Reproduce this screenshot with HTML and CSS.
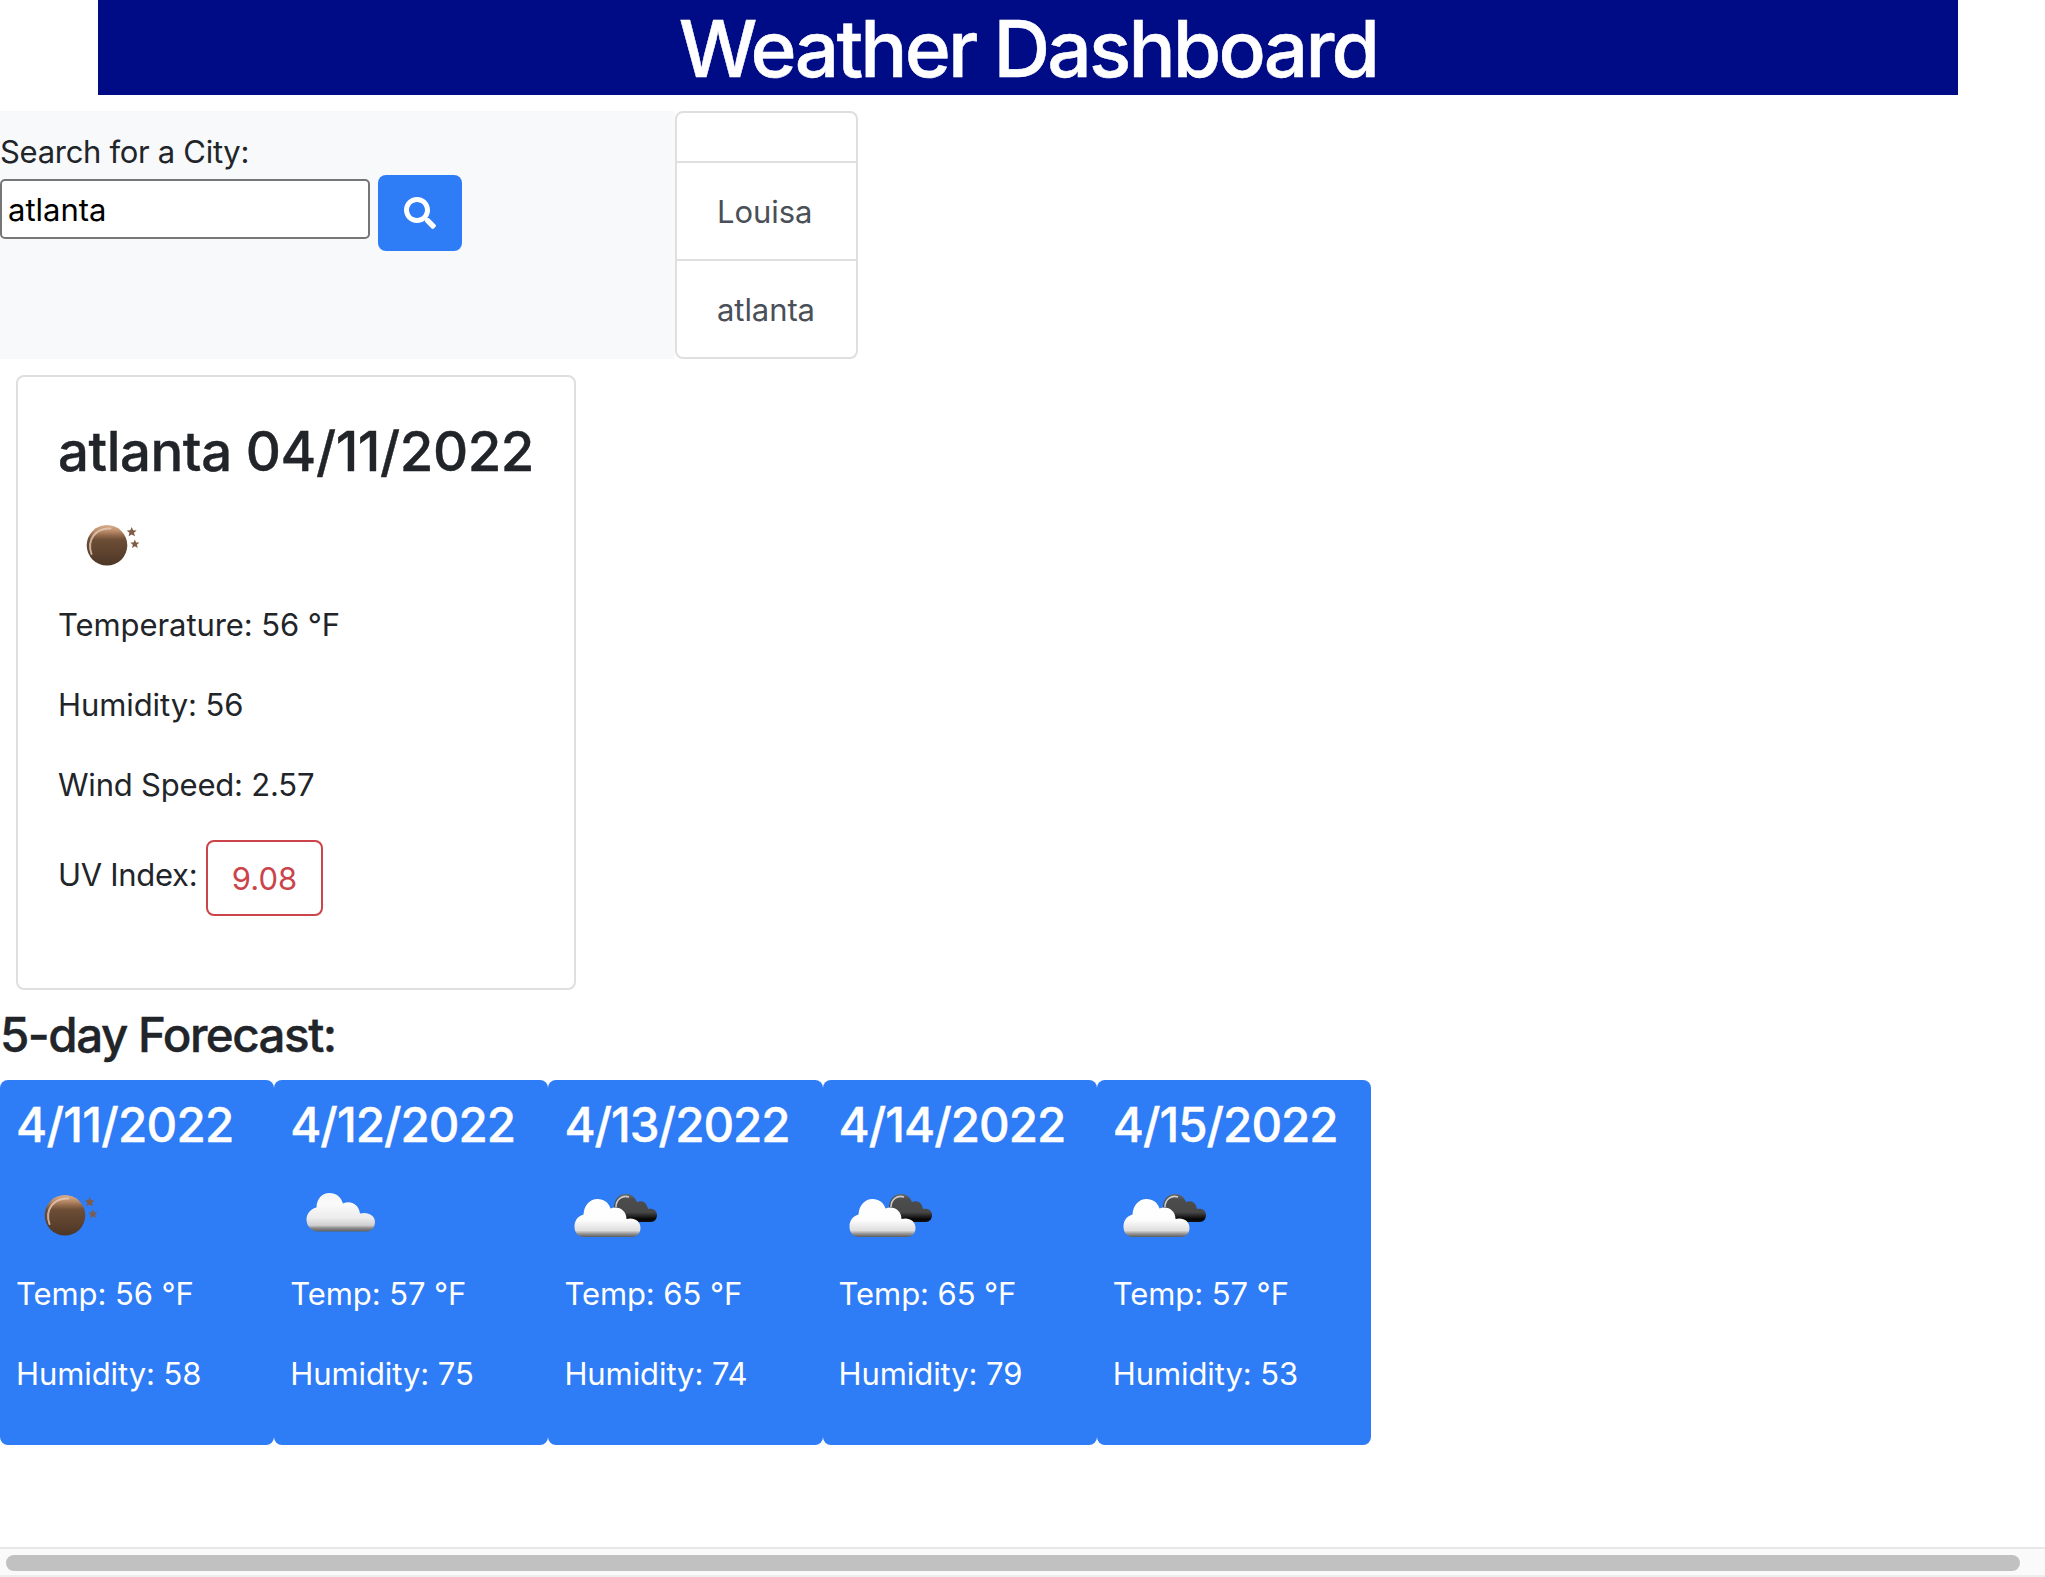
FILE: index.html
```html
<!DOCTYPE html>
<html lang="en">
<head>
<meta charset="utf-8">
<title>Weather Dashboard</title>
<link rel="stylesheet" href="styles.css">
</head>
<body>
<svg class="defs" width="0" height="0" aria-hidden="true">
  <defs>
    <linearGradient id="moon" x1="0" y1="0" x2="0" y2="1">
      <stop offset="0" stop-color="#d9ad8c"/><stop offset=".14" stop-color="#bd8e6c"/><stop offset=".27" stop-color="#8d6548"/><stop offset=".36" stop-color="#6d4e36"/><stop offset="1" stop-color="#4d3626"/>
    </linearGradient>
    <linearGradient id="cloud" x1="0" y1="0" x2="0" y2="1">
      <stop offset="0" stop-color="#f6f6f6"/><stop offset=".3" stop-color="#fafafa"/><stop offset=".65" stop-color="#ececec"/><stop offset=".84" stop-color="#cfcfcf"/><stop offset=".91" stop-color="#8c8c8c"/><stop offset="1" stop-color="#606060"/>
    </linearGradient>
    <linearGradient id="front" x1="0" y1="0" x2="0" y2="1">
      <stop offset="0" stop-color="#fff"/><stop offset=".55" stop-color="#fdfdfd"/><stop offset=".83" stop-color="#dedede"/><stop offset=".91" stop-color="#999"/><stop offset="1" stop-color="#5c5c5c"/>
    </linearGradient>
    <linearGradient id="dark" x1="0" y1="0" x2="0" y2="1">
      <stop offset="0" stop-color="#666"/><stop offset=".2" stop-color="#4c4c4c"/><stop offset=".65" stop-color="#484848"/><stop offset=".9" stop-color="#050505"/><stop offset="1" stop-color="#111"/>
    </linearGradient>
    <symbol id="icon-night" viewBox="0 0 100 100">
      <circle cx="49" cy="50.300" r="20.300" fill="url(#moon)"/>
      <path d="M33.500 59C28.500 45 37.500 32.500 52.500 33.500" fill="none" stroke="#e6cab8" stroke-width="2" stroke-linecap="round" opacity=".8"/>
      <path d="M73.700 32l1.400 3.300 3.600.2-2.700 2.300.9 3.500-3.200-1.900-3.100 1.900.8-3.500-2.700-2.300 3.600-.2zM76.800 44.500l1.300 3 3.300.1-2.500 2.100.8 3.200-2.900-1.700-2.800 1.700.8-3.200-2.500-2.100 3.200-.1z" fill="#805b45"/>
    </symbol>
    <symbol id="icon-cloud" viewBox="0 0 100 100">
      <path d="M28 66.500C21 66.500 16.500 60.500 16.500 54.500 16.500 48.500 21 43.500 26.500 42.500 26.500 34 32 28 39.500 28 46 28 51 32 53 38.500 60.500 35 69 39.500 70 48.500 78 46.500 85 50.500 85 57 85 62 81.500 66.500 77 66.500Z" fill="url(#cloud)"/>
    </symbol>
    <symbol id="icon-broken" viewBox="0 0 100 100">
      <path d="M50 52V41C51 33 56 29 62 29 67.500 29 71 32 73 37 79 34.500 83 38 84 44 89.500 43 93 46 93 50 93 54 90.500 57 87 57H62Z" fill="url(#dark)"/>
      <path d="M52 42C52 35 58 29.500 65 32" fill="none" stroke="#ccc" stroke-width="1.600"/>
      <path d="M20 72C14 72 10.500 67.500 10.500 61.500 10.500 55.500 14 51 19.500 49.500 20 40 26 34 33.500 34 40 34 44.500 37.500 46.500 43.500 54.500 40.500 62.500 45.500 62.500 54 70 52 76.500 56 76.500 63 76.500 68.500 73 72 68 72Z" fill="url(#front)"/>
    </symbol>
  </defs>
</svg>

<header class="banner"><h1>Weather Dashboard</h1></header>

<section class="top">
  <div class="search">
    <label class="search-label" for="city">Search for a City:</label>
    <div class="search-row">
      <input class="search-input" id="city" type="text" value="atlanta">
      <button class="search-button" type="button" aria-label="Search">
        <svg width="32" height="32" viewBox="0 0 512 512"><path fill="#fff" d="M505 442.700L405.300 343c-4.500-4.500-10.600-7-17-7H372c27.600-35.300 44-79.700 44-128C416 93.100 322.900 0 208 0S0 93.100 0 208s93.100 208 208 208c48.300 0 92.700-16.400 128-44v16.300c0 6.400 2.500 12.500 7 17l99.700 99.700c9.400 9.400 24.600 9.400 33.900 0l28.300-28.300c9.400-9.400 9.400-24.600.1-34zM208 336c-70.700 0-128-57.200-128-128 0-70.700 57.200-128 128-128 70.700 0 128 57.200 128 128 0 70.700-57.200 128-128 128z"/></svg>
      </button>
    </div>
  </div>
  <ul class="history">
    <li class="history-item history-empty"></li>
    <li class="history-item">Louisa</li>
    <li class="history-item">atlanta</li>
  </ul>
</section>

<section class="current">
  <h2 class="current-title">atlanta 04/11/2022</h2>
  <svg class="weather-icon"><use href="#icon-night"/></svg>
  <p>Temperature: 56 °F</p>
  <p>Humidity: 56</p>
  <p class="wind">Wind Speed: 2.57</p>
  <div class="uv"><span class="uv-label">UV Index:</span><button class="uv-button" type="button">9.08</button></div>
</section>

<h3 class="forecast-title">5-day Forecast:</h3>
<section class="forecast">
  <article class="day"><h3 class="narrow">4/11/2022</h3><svg class="weather-icon"><use href="#icon-night"/></svg><p>Temp: 56 °F</p><p>Humidity: 58</p></article>
  <article class="day"><h3>4/12/2022</h3><svg class="weather-icon"><use href="#icon-cloud"/></svg><p>Temp: 57 °F</p><p>Humidity: 75</p></article>
  <article class="day"><h3>4/13/2022</h3><svg class="weather-icon"><use href="#icon-broken"/></svg><p>Temp: 65 °F</p><p>Humidity: 74</p></article>
  <article class="day"><h3>4/14/2022</h3><svg class="weather-icon"><use href="#icon-broken"/></svg><p>Temp: 65 °F</p><p>Humidity: 79</p></article>
  <article class="day"><h3>4/15/2022</h3><svg class="weather-icon"><use href="#icon-broken"/></svg><p>Temp: 57 °F</p><p>Humidity: 53</p></article>
</section>

<div class="scrollbar"><div class="scrollbar-thumb"></div></div>
</body>
</html>
```
FILE: styles.css
```css
* { box-sizing: border-box; }
body {
  margin: 0;
  height: 1577px;
  display: flex;
  flex-direction: column;
  overflow: hidden;
  background: #fff;
  color: #212529;
  font-family: Inter, "Liberation Sans", sans-serif;
  font-size: 31px;
  line-height: 48px;
  letter-spacing: -0.08px;
}
h1, h2, h3, p, ul { margin: 0; padding: 0; }
h1, h2, h3 { font-weight: 500; }
.defs { position: absolute; }
.banner {
  width: 1860px;
  height: 95px;
  margin-left: 98px;
  padding-top: 1px;
  background: #000c85;
  color: #fff;
  text-align: center;
}
.banner h1 { font-size: 78.5px; line-height: 95px; letter-spacing: -2.85px; -webkit-text-stroke: 0.5px #fff; }
.top { display: flex; height: 248px; margin-top: 16px; }
.search { width: 675px; padding-top: 17px; background: #f8f9fb; }
.search-label { display: block; height: 47px; letter-spacing: -0.3px; }
.search-row { display: flex; align-items: flex-start; gap: 8px; }
.search-input {
  width: 370px;
  height: 60px;
  margin-top: 4px;
  padding: 0 6px;
  border: 2px solid #767676;
  border-radius: 5px;
  background: #fff;
  color: #000;
  font: inherit;
}
.search-button {
  display: flex;
  align-items: center;
  justify-content: center;
  width: 84px;
  height: 76px;
  padding: 0;
  border: 0;
  border-radius: 8px;
  background: #2e7cf6;
}
.history {
  width: 183px;
  border: 2px solid #dfdfdf;
  border-radius: 8px;
  list-style: none;
  color: #495057;
}
.history-item { height: 98px; padding: 25px 40px 0; border-top: 2px solid #dfdfdf; }
.history-empty { height: 48px; padding: 0; border-top: 0; }
.current {
  width: 560px;
  height: 615px;
  margin: 16px 0 0 16px;
  padding: 41px 40px 0;
  border: 2px solid #dfdfdf;
  border-radius: 8px;
}
.current-title { font-size: 54.5px; line-height: 67px; letter-spacing: -0.43px; -webkit-text-stroke: 0.4px; white-space: nowrap; }
.weather-icon { display: block; width: 100px; height: 100px; margin: 10px 0 6px; filter: blur(0.6px); }
.current p { margin-bottom: 32px; }
.current .wind { letter-spacing: -0.2px; }
.uv { display: flex; align-items: flex-start; gap: 8px; margin-top: -1px; }
.uv-label { width: 140px; margin-top: 11px; letter-spacing: -0.3px; }
.uv-button {
  width: 117px;
  height: 76px;
  padding: 1px 0 0;
  border: 2px solid #cb444a;
  border-radius: 8px;
  background: #fff;
  color: #cb444a;
  font: inherit;
}
.forecast-title { margin-top: 16px; font-size: 47.5px; line-height: 58px; letter-spacing: -1.5px; -webkit-text-stroke: 0.4px; }
.forecast { display: flex; margin-top: 16px; }
.day {
  width: 274.2px;
  height: 365px;
  padding: 16px;
  border-radius: 8px;
  background: #2e7cf6;
  color: #fff;
}
.day h3 { font-size: 47.5px; line-height: 58px; letter-spacing: -1px; -webkit-text-stroke: 0.4px; white-space: nowrap; }
.day .narrow { letter-spacing: -0.75px; }
.day .weather-icon { margin: 11px 0 5px; }
.day p { margin-bottom: 32px; }
.scrollbar {
  height: 30px;
  margin-top: auto;
  padding: 6px 0 0 6px;
  border-top: 2px solid #e8e8e8;
  border-bottom: 2px solid #ededed;
  background: #fafafa;
}
.scrollbar-thumb { width: 2014px; height: 16px; border-radius: 8px; background: #c1c1c1; }
```
